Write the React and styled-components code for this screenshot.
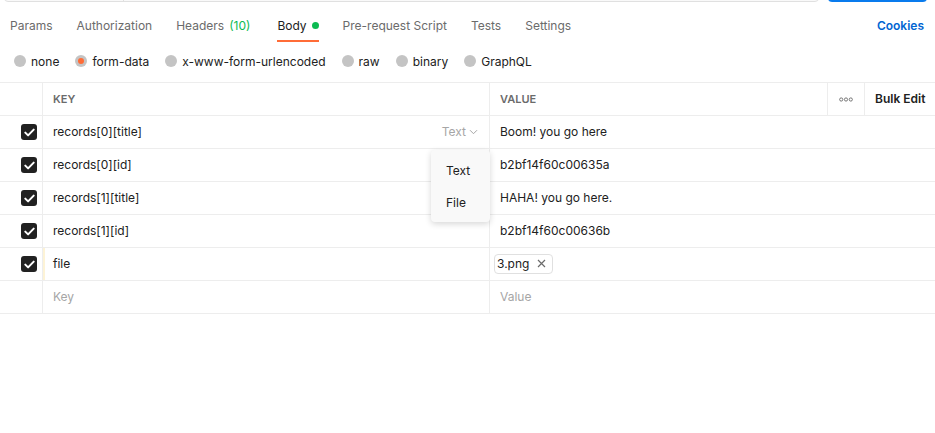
import React from "react";
import styled, { createGlobalStyle } from "styled-components";

const GlobalStyle = createGlobalStyle`
  html, body {
    margin: 0;
    padding: 0;
    background: #ffffff;
  }
  body {
    font-family: Inter, "Noto Sans", "Liberation Sans", sans-serif;
    color: #212121;
    -webkit-font-smoothing: antialiased;
  }
`;

const Page = styled.div`
  width: 935px;
  height: 433px;
  overflow: hidden;
  background: #fff;
`;

const UrlRow = styled.div`
  display: flex;
  height: 36px;
  margin-top: -34px;
  padding: 0 8px 0 4px;
  gap: 9px;
`;

const UrlInput = styled.div`
  flex: 1;
  display: flex;
  border: 1px solid #e0e0e0;
  border-radius: 4px;
  background: #f9f9f9;
`;

const MethodBox = styled.div`
  width: 118px;
  border-right: 1px solid #e0e0e0;
`;

const SendButton = styled.div`
  width: 99px;
  border-radius: 4px;
  background: #097bed;
`;

const TabBar = styled.div`
  display: flex;
  align-items: flex-end;
  margin-top: 7px;
  padding: 0 11px 0 10px;
  gap: 24px;
`;

const Tab = styled.div`
  display: flex;
  align-items: center;
  gap: 5px;
  height: 33px;
  box-sizing: border-box;
  padding-top: 1px;
  border-bottom: 2px solid ${p => (p.active ? "#ff6c37" : "transparent")};
  font-size: 12px;
  color: ${p => (p.active ? "#212121" : "#6b6b6b")};
  white-space: nowrap;
`;

const Count = styled.span`
  color: #0cbb52;
  margin-right: 3px;
`;

const Dot = styled.span`
  width: 7px;
  height: 7px;
  border-radius: 50%;
  background: #0cbb52;
`;

const Spacer = styled.div`
  flex: 1;
`;

const CookiesLink = styled.div`
  height: 33px;
  display: flex;
  align-items: center;
  box-sizing: border-box;
  padding-bottom: 1px;
  font-size: 12px;
  font-weight: 600;
  color: #0265d2;
`;

const RadioRow = styled.div`
  display: flex;
  align-items: center;
  height: 40px;
  box-sizing: border-box;
  padding: 0 0 2px 14px;
  gap: 16px;
`;

const RadioItem = styled.label`
  display: flex;
  align-items: center;
  gap: 5px;
  font-size: 12px;
  color: #212121;
`;

const RadioCircle = styled.span`
  width: 12px;
  height: 12px;
  border-radius: 50%;
  background: #c4c4c4;
  display: flex;
  align-items: center;
  justify-content: center;
  &::after {
    content: "";
    display: ${p => (p.checked ? "block" : "none")};
    width: 6px;
    height: 6px;
    border-radius: 50%;
    background: #ff6c37;
  }
`;

const Table = styled.div`
  position: relative;
  border-top: 1px solid #ededed;
`;

const Row = styled.div`
  display: grid;
  grid-template-columns: ${p => (p.header ? "42px 447px 338px 37px 1fr" : "42px 447px 1fr")};
  height: 33px;
  border-bottom: 1px solid #ededed;
  box-sizing: border-box;
`;

const Cell = styled.div`
  display: flex;
  align-items: center;
  min-width: 0;
  padding: 0 10px 1px 10px;
  border-left: ${p => (p.first ? "none" : "1px solid #ededed")};
  box-shadow: ${p => (p.highlight ? "inset 2px 0 0 #fdf3d6" : "none")};
  font-size: 12px;
  white-space: nowrap;
  color: ${p => (p.placeholder ? "#a6a6a6" : "#212121")};
`;

const CheckCell = styled(Cell)`
  justify-content: flex-end;
  padding: 0 5px 0 0;
`;

const HeadLabel = styled(Cell)`
  font-size: 11px;
  font-weight: 600;
  color: #6b6b6b;
`;

const DotsCell = styled(Cell)`
  justify-content: center;
  padding: 0;
  color: #6b6b6b;
`;

const BulkEdit = styled(Cell)`
  font-size: 12px;
  font-weight: 600;
  color: #212121;
`;

const Checkbox = styled.span`
  width: 16px;
  height: 16px;
  border-radius: 3px;
  background: #212121;
  display: flex;
  align-items: center;
  justify-content: center;
`;

const KeyText = styled.span`
  flex: 1;
`;

const TypeSelect = styled.span`
  display: flex;
  align-items: center;
  gap: 3px;
  color: #a6a6a6;
  font-size: 12px;
  margin-right: 1px;
`;

const FileChip = styled.span`
  display: flex;
  align-items: center;
  gap: 8px;
  height: 20px;
  margin-left: -6px;
  padding: 0 6px 0 2px;
  border: 1px solid #e0e0e0;
  border-radius: 4px;
  box-sizing: border-box;
`;

const Menu = styled.div`
  position: absolute;
  left: 431px;
  top: 67px;
  width: 59px;
  padding: 4px 0;
  background: #f9f9f9;
  border-radius: 4px;
  box-shadow: 0 2px 6px rgba(0, 0, 0, 0.16);
  box-sizing: border-box;
`;

const MenuItem = styled.div`
  height: 32px;
  display: flex;
  align-items: center;
  padding-left: 15px;
  font-size: 12px;
  color: #212121;
`;

const Check = () => (
  <svg width="11" height="9" viewBox="0 0 11 9" fill="none">
    <path d="M1.3 4.6l2.8 2.8L9.7 1.6" stroke="#fff" strokeWidth="2" strokeLinecap="round" strokeLinejoin="round" />
  </svg>
);

const Chevron = () => (
  <svg width="9" height="6" viewBox="0 0 9 6" fill="none">
    <path d="M1 1.2l3.5 3.5L8 1.2" stroke="#a6a6a6" strokeWidth="1" />
  </svg>
);

const Close = () => (
  <svg width="9" height="9" viewBox="0 0 9 9" fill="none">
    <path d="M1 1l7 7M8 1L1 8" stroke="#6b6b6b" strokeWidth="1.2" />
  </svg>
);

const Dots = () => (
  <svg width="14" height="5" viewBox="0 0 14 5" fill="none">
    <circle cx="2.2" cy="2.5" r="1.6" stroke="#6b6b6b" strokeWidth="0.9" />
    <circle cx="7" cy="2.5" r="1.6" stroke="#6b6b6b" strokeWidth="0.9" />
    <circle cx="11.8" cy="2.5" r="1.6" stroke="#6b6b6b" strokeWidth="0.9" />
  </svg>
);

const tabs = ["Params", "Authorization", "Headers", "Body", "Pre-request Script", "Tests", "Settings"];
const bodyTypes = ["none", "form-data", "x-www-form-urlencoded", "raw", "binary", "GraphQL"];

const rows = [
  { key: "records[0][title]", value: "Boom! you go here", select: true },
  { key: "records[0][id]", value: "b2bf14f60c00635a" },
  { key: "records[1][title]", value: "HAHA! you go here." },
  { key: "records[1][id]", value: "b2bf14f60c00636b" },
  { key: "file", file: "3.png", highlight: true },
];

export default function App() {
  return (
    <Page>
      <GlobalStyle />
      <UrlRow>
        <UrlInput>
          <MethodBox />
        </UrlInput>
        <SendButton />
      </UrlRow>

      <TabBar>
        {tabs.map(t => (
          <Tab key={t} active={t === "Body"}>
            {t}
            {t === "Headers" && <Count>(10)</Count>}
            {t === "Body" && <Dot />}
          </Tab>
        ))}
        <Spacer />
        <CookiesLink>Cookies</CookiesLink>
      </TabBar>

      <RadioRow>
        {bodyTypes.map(b => (
          <RadioItem key={b}>
            <RadioCircle checked={b === "form-data"} />
            {b}
          </RadioItem>
        ))}
      </RadioRow>

      <Table>
        <Row header>
          <Cell first />
          <HeadLabel>KEY</HeadLabel>
          <HeadLabel>VALUE</HeadLabel>
          <DotsCell>
            <Dots />
          </DotsCell>
          <BulkEdit>Bulk Edit</BulkEdit>
        </Row>
        {rows.map(r => (
          <Row key={r.key}>
            <CheckCell first>
              <Checkbox>
                <Check />
              </Checkbox>
            </CheckCell>
            <Cell highlight={r.highlight}>
              <KeyText>{r.key}</KeyText>
              {r.select && (
                <TypeSelect>
                  Text <Chevron />
                </TypeSelect>
              )}
            </Cell>
            <Cell>
              {r.file ? (
                <FileChip>
                  {r.file}
                  <Close />
                </FileChip>
              ) : (
                r.value
              )}
            </Cell>
          </Row>
        ))}
        <Row>
          <Cell first />
          <Cell placeholder>Key</Cell>
          <Cell placeholder>Value</Cell>
        </Row>

        <Menu>
          <MenuItem>Text</MenuItem>
          <MenuItem>File</MenuItem>
        </Menu>
      </Table>
    </Page>
  );
}
